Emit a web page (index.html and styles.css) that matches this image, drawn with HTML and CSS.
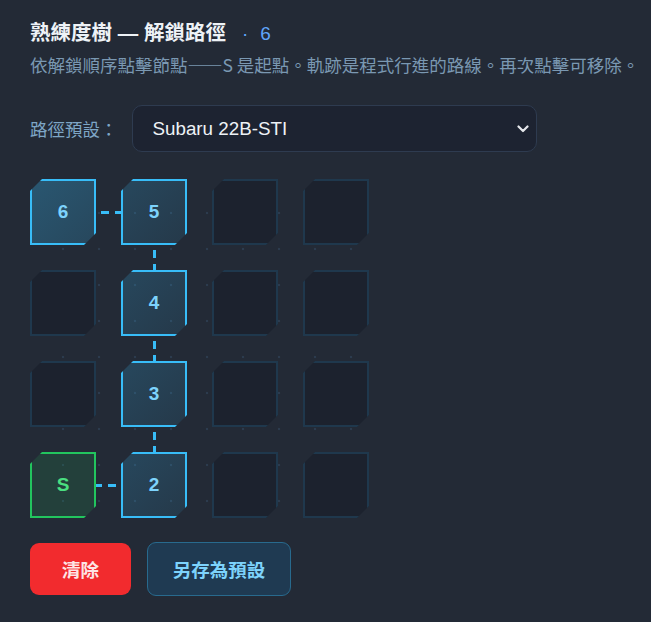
FILE: index.html
```html
<!DOCTYPE html>
<html lang="zh-Hant">
<head>
    <meta charset="UTF-8">
    <meta name="viewport" content="width=device-width, initial-scale=1.0">
    <title>熟練度樹 — 解鎖路徑</title>
    <link rel="stylesheet" href="styles.css">
</head>
<body>
    <h1 class="title">熟練度樹 — 解鎖路徑<span class="dot">·</span><span class="count">6</span></h1>
    <p class="hint">依解鎖順序點擊節點——S 是起點。軌跡是程式行進的路線。再次點擊可移除。</p>

    <!-- 路徑預設 -->
    <div class="preset-row">
        <label for="preset" class="preset-label">路徑預設：</label>
        <div class="select-wrap">
            <select id="preset" class="preset-select">
                <option>Subaru 22B-STI</option>
                <option>Mitsubishi Evo VI</option>
                <option>Toyota GT86</option>
            </select>
            <svg class="chevron" width="12" height="8" viewBox="0 0 12 8">
                <path d="M1.5 1.5 L6 6 L10.5 1.5" fill="none" stroke="#e5e7eb" stroke-width="2.2" stroke-linecap="round" stroke-linejoin="round"/>
            </svg>
        </div>
    </div>

    <!-- 節點格 -->
    <div class="tree">
        <!-- row 1 -->
        <div class="cell">
            <div class="node on head">6</div>
            <span class="link link-h from-right"></span>
        </div>
        <div class="cell">
            <div class="node on">5</div>
        </div>
        <div class="cell"><div class="node"></div></div>
        <div class="cell"><div class="node"></div></div>

        <!-- row 2 -->
        <div class="cell"><div class="node"></div></div>
        <div class="cell">
            <span class="link link-v from-bottom"></span>
            <div class="node on">4</div>
        </div>
        <div class="cell"><div class="node"></div></div>
        <div class="cell"><div class="node"></div></div>

        <!-- row 3 -->
        <div class="cell"><div class="node"></div></div>
        <div class="cell">
            <span class="link link-v from-bottom"></span>
            <div class="node on">3</div>
        </div>
        <div class="cell"><div class="node"></div></div>
        <div class="cell"><div class="node"></div></div>

        <!-- row 4 -->
        <div class="cell">
            <div class="node start">S</div>
            <span class="link link-h from-left"></span>
        </div>
        <div class="cell">
            <span class="link link-v from-bottom"></span>
            <div class="node on">2</div>
        </div>
        <div class="cell"><div class="node"></div></div>
        <div class="cell"><div class="node"></div></div>
    </div>

    <!-- 按鈕 -->
    <div class="actions">
        <button class="btn btn-clear">清除</button>
        <button class="btn btn-save">另存為預設</button>
    </div>
</body>
</html>
```

FILE: styles.css
```css
body {
    margin: 0;
    padding: 0 4px 0 30px;
    background: #232a36;
    color: #e5e9f0;
    font-family: "Liberation Sans", "Noto Sans CJK TC", sans-serif;
}

.title {
    margin: 19px 0 0;
    font-size: 20.5px;
    line-height: 28px;
    font-weight: bold;
    color: #eef2f6;
}

.title .dot,
.title .count {
    font-size: 19px;
    font-weight: normal;
    color: #60a5fa;
}

.title .dot {
    margin-left: 16px;
}

.title .count {
    margin-left: 12px;
}

.hint {
    margin: 4px 0 0;
    font-family: "Noto Sans CJK TC", "Liberation Sans", sans-serif;
    font-size: 17.5px;
    line-height: 26px;
    color: #7a98b2;
    white-space: nowrap;
}

.preset-row {
    margin-top: 27px;
    display: flex;
    align-items: center;
    gap: 14px;
}

.preset-label {
    font-size: 17.5px;
    color: #7ea6c6;
}

.select-wrap {
    position: relative;
}

.preset-select {
    appearance: none;
    -webkit-appearance: none;
    width: 405px;
    height: 47px;
    padding: 0 20px;
    box-sizing: border-box;
    background: #1d2331;
    border: 1px solid #2e3b50;
    border-radius: 10px;
    color: #eef2f6;
    font-family: inherit;
    font-size: 18.8px;
}

.chevron {
    position: absolute;
    right: 8px;
    top: 20px;
    pointer-events: none;
}

/* 節點格 */
.tree {
    margin-top: 27px;
    display: grid;
    grid-template-columns: repeat(4, 66px);
    grid-auto-rows: 66px;
    gap: 25px;
    width: 339px;
    background-image: radial-gradient(circle, #2c3b4e 1px, transparent 1.6px);
    background-size: 36px 36px;
    background-position: 15px 16px;
}

.cell {
    position: relative;
}

.node {
    width: 66px;
    height: 66px;
    box-sizing: border-box;
    border: 2px solid #1f384d;
    background: #1c222e;
    clip-path: polygon(12px 0, 100% 0, 100% calc(100% - 12px), calc(100% - 12px) 100%, 0 100%, 0 12px);
    display: flex;
    align-items: center;
    justify-content: center;
    font-size: 19px;
    font-weight: bold;
    color: #7dd3fc;
}

.node.on {
    border-color: #38bdf8;
    background: linear-gradient(135deg, rgba(56, 189, 248, 0.2), rgba(56, 189, 248, 0.1));
}

.node.head {
    background: linear-gradient(135deg, rgba(56, 189, 248, 0.3), rgba(56, 189, 248, 0.2));
}

.node.start {
    border-color: #22c55e;
    background: rgba(34, 197, 94, 0.14);
    color: #4ade80;
}

/* 連線 */
.link {
    position: absolute;
    --c: #38bdf8;
}

.link-h {
    left: 100%;
    top: 32px;
    width: 25px;
    height: 3px;
}

.link-v {
    bottom: 100%;
    left: 32px;
    width: 3px;
    height: 25px;
}

.link.from-left {
    background: linear-gradient(90deg, var(--c) 0 6px, transparent 6px 12px, var(--c) 12px 20px, transparent 20px);
}

.link.from-right {
    background: linear-gradient(270deg, var(--c) 0 6px, transparent 6px 12px, var(--c) 12px 20px, transparent 20px);
}

.link.from-bottom {
    background: linear-gradient(0deg, var(--c) 0 6px, transparent 6px 12px, var(--c) 12px 20px, transparent 20px);
}

/* 按鈕 */
.actions {
    margin-top: 24px;
    display: flex;
    align-items: center;
    gap: 16px;
}

.btn {
    font-family: "Noto Sans CJK TC", sans-serif;
    font-size: 18.5px;
    font-weight: bold;
    border-radius: 9px;
    cursor: pointer;
}

.btn-clear {
    width: 101px;
    height: 52px;
    border: none;
    background: #f22b2e;
    color: #fde4e4;
}

.btn-save {
    width: 144px;
    height: 54px;
    border: 1px solid #286a8e;
    background: #1f3a52;
    color: #7dd3fc;
}
```
